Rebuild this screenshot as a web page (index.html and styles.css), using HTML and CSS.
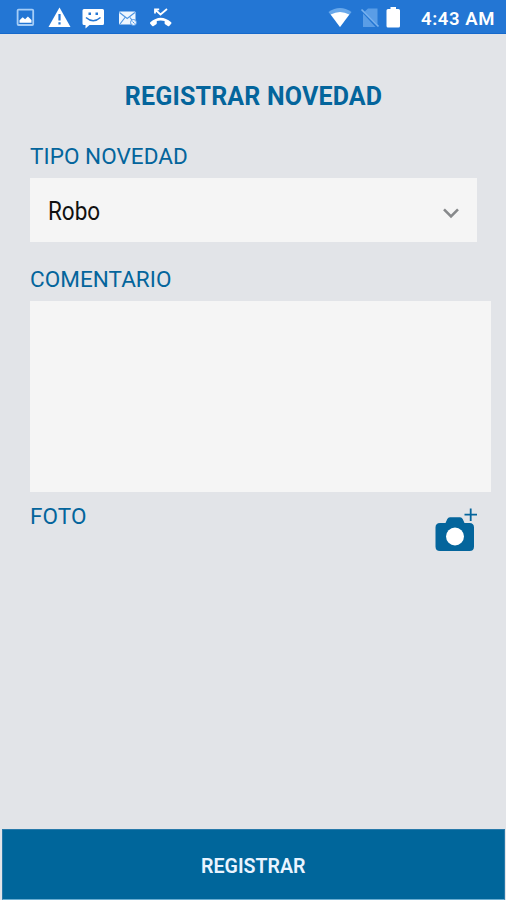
FILE: index.html
```html
<!DOCTYPE html>
<html lang="es">
<head>
<meta charset="utf-8">
<title>Registrar novedad</title>
<link rel="stylesheet" href="styles.css">
</head>
<body>
<div class="screen">
  <header class="status">
    <svg class="status-icons" width="190" height="34" viewBox="0 0 190 34">
      <rect x="17.600" y="9.600" width="15.600" height="15.400" rx="1" fill="none" stroke="#a5cdf7" stroke-width="1.800"/>
      <path d="M19.500 22.800v-2.600l3.200-3 2.400 2 2.800-2.800 3.600 3.600v2.800z" fill="#fff"/>
      <path d="M59.500 7.500L70.500 27h-22z" fill="#fff"/>
      <path d="M58.400 14h2.200v6.600h-2.200zM58.400 22.200h2.200v2.200h-2.200z" fill="#2376d4"/>
      <path d="M84 9h18.500q1.500 0 1.500 1.500v13q0 1.500-1.500 1.500H89.500L85.500 28.500V25H84q-1.500 0-1.500-1.500v-13Q82.500 9 84 9z" fill="#fff"/>
      <path d="M86 17.500q7.200 6.500 14.500 0" fill="none" stroke="#2376d4" stroke-width="1.500"/>
      <path d="M88.500 12.500h2.500v2.500h-2.500zM95.500 12.500h2.500v2.500h-2.500z" fill="#2376d4"/>
      <rect x="119" y="11.500" width="16.500" height="13" rx="1" fill="#eef6ff"/>
      <path d="M119.500 12.500l7.700 6 7.700-6M120 24l5-6.500M135 24l-5-6.500" fill="none" stroke="#4f96e3" stroke-width="1.200"/>
      <circle cx="133.500" cy="22.500" r="3" fill="#e5f1ff" stroke="#4f96e3"/>
      <path d="M132.500 21.500l2 2" stroke="#4f96e3"/>
      <path d="M155 9.500l5.500 5L167 9M155 13.500V9.300h4.200" fill="none" stroke="#fff" stroke-width="1.800"/>
      <path d="M150.300 22.300Q160.700 13 171.200 22.300q.6.700 0 1.400l-2 2.200q-.7.700-1.400.2l-2.700-1.800q-.6-.5-.5-1.200v-2q-4-1.200-7.800 0v2q0 .7-.5 1.200l-2.700 1.800q-.7.500-1.400-.2l-2-2.200q-.5-.7.100-1.400z" fill="#fff"/>
    </svg>
    <div class="status-right">
      <svg width="76" height="34" viewBox="328 0 76 34">
        <path d="M328.500 12q11.500-8 23 0L340 27z" fill="#69a8ea"/>
        <path d="M330.700 14.500q9.300-5 18.600 0L340 27z" fill="#fff"/>
        <path d="M368 8.500h9.500v16L364.500 11.700zM363 13.500L375.500 27H363z" fill="#5a9de6"/>
        <path d="M361.500 9.500l17 17" stroke="#79b2ef" stroke-width="1.700"/>
        <path d="M390.500 7h5.500v2h2.500q1.500 0 1.500 1.500V26q0 1.500-1.500 1.500H388q-1.500 0-1.500-1.500V10.500q0-1.500 1.500-1.500h2.500z" fill="#fff"/>
      </svg>
      <span class="clock">4:43 AM</span>
    </div>
  </header>
  <main class="form">
    <h1 class="title">REGISTRAR NOVEDAD</h1>
    <div class="label"><span>TIPO NOVEDAD</span></div>
    <div class="select">
      <span class="value">Robo</span>
      <svg width="18" height="12" viewBox="0 0 18 12"><path d="M2 2.300l7 7 7-7" fill="none" stroke="#87898b" stroke-width="2.600"/></svg>
    </div>
    <div class="label label-comment"><span>COMENTARIO</span></div>
    <div class="comment"></div>
    <div class="photo">
      <div class="label label-photo"><span>FOTO</span></div>
      <svg width="44" height="46" viewBox="435 507 44 46">
        <path d="M440 523h5.500l1.800-4q.8-1.800 2.700-1.800h10q1.900 0 2.700 1.800l1.800 4h5q4.500 0 4.500 4.500v19q0 4.500-4.500 4.500H440q-4.500 0-4.500-4.500v-19q0-4.500 4.500-4.500z" fill="#04659c"/>
        <circle cx="455" cy="536.500" r="9" fill="#fff"/>
        <path d="M464.500 514.700h12.500M470.700 508.500v12.500" stroke="#04659c" stroke-width="1.800"/>
      </svg>
    </div>
  </main>
  <footer class="submit"><span class="submit-text">REGISTRAR</span></footer>
</div>
</body>
</html>
```
FILE: styles.css
```css
* { box-sizing: border-box; }
body { margin: 0; font-family: Roboto, "Liberation Sans", sans-serif; }
svg { display: block; flex: none; }
span { display: inline-block; white-space: nowrap; transform-origin: left center; }
.screen { width: 506px; height: 900px; display: flex; flex-direction: column; background: #e2e4e8; }
.status { height: 34px; display: flex; justify-content: space-between; background: #2376d4; border-bottom: 1px solid #1669cb; }
.status-right { display: flex; width: 178px; }
.clock { margin-left: 17px; font-size: 18.5px; font-weight: 600; line-height: 38px; letter-spacing: .6px; color: #fff; }
.form { flex: 1; padding: 45px 15px 0 30px; }
.title { margin: 0 14px 0 0; font-size: 25px; font-weight: 700; line-height: 36px; letter-spacing: .18px; text-align: center; color: #04659c; white-space: nowrap; }
.label { height: 36px; margin-top: 23px; font-size: 22.5px; line-height: 36px; letter-spacing: .05px; color: #04659c; }
.select { width: 447px; height: 64px; margin-top: 4px; padding: 0 17px 0 18px; display: flex; align-items: center; justify-content: space-between; background: #f5f5f5; }
.value { font-size: 25px; line-height: 64px; color: #111; transform: translateY(2px) scaleX(.9); }
.select svg { margin-top: 5px; }
.label-comment { margin-top: 19px; }
.comment { height: 191px; margin-top: 4px; background: #f5f5f5; }
.photo { display: flex; justify-content: space-between; padding: 15px 12px 0 0; }
.label-photo { margin-top: -9px; }
.submit { height: 71px; margin: 0 1px 0 2px; display: flex; align-items: center; justify-content: center; background: #00669b; border: 1px solid #2879aa; border-bottom-color: #6aaed2; font-size: 20px; font-weight: 600; color: #e9f4ff; }
.submit-text { transform-origin: center; transform: translateY(1px) scaleX(.98); }
```
